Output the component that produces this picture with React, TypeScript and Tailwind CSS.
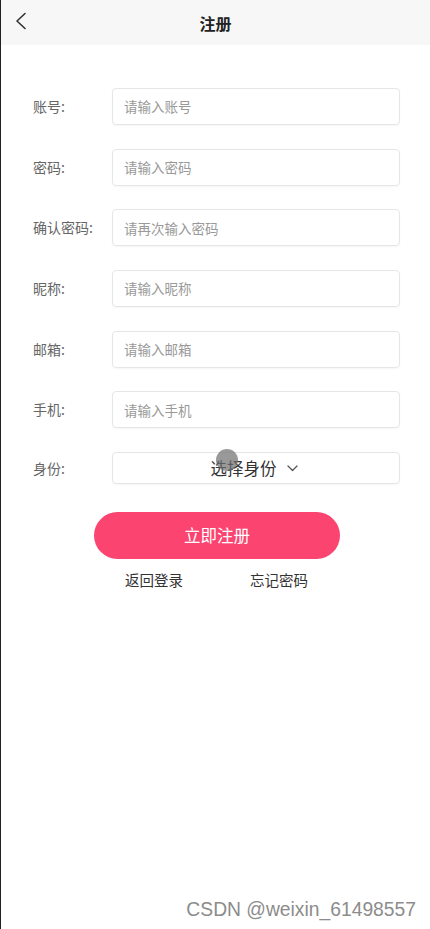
import React from "react";

const rows = [
  { label: "账号:", ph: "请输入账号" },
  { label: "密码:", ph: "请输入密码" },
  { label: "确认密码:", ph: "请再次输入密码" },
  { label: "昵称:", ph: "请输入昵称" },
  { label: "邮箱:", ph: "请输入邮箱" },
  { label: "手机:", ph: "请输入手机" },
];

export default function App() {
  return (
    <div
      className="relative w-[430px] h-[929px] bg-white border-l border-[#222] overflow-hidden"
      style={{ fontFamily: '"Noto Sans CJK SC", "Noto Sans", sans-serif' }}
    >
      <div className="relative h-[45px] bg-[#f7f7f7] flex items-center justify-center">
        <svg className="absolute left-[13px] top-[12px]" width="14" height="18" viewBox="0 0 14 18" fill="none">
          <path d="M11 1.5 L3 9 L11 16.5" stroke="#333" strokeWidth="1.6" strokeLinecap="round" strokeLinejoin="round" />
        </svg>
        <span className="text-[16px] font-bold text-[#222]">注册</span>
      </div>

      <div className="mt-[43px] flex flex-col gap-[23.7px] pl-[32px]">
        {rows.map((r) => (
          <div key={r.label} className="flex items-center">
            <div className="w-[79px] text-[14px] text-[#666]">{r.label}</div>
            <div className="w-[288px] h-[37px] border border-[#e6e6e6] rounded-[4px] shadow-[0_1px_2px_rgba(0,0,0,0.04)] flex items-center pl-[11px] text-[13.5px] text-[#999]">
              {r.ph}
            </div>
          </div>
        ))}
        <div className="flex items-center">
          <div className="w-[79px] text-[14px] text-[#666]">身份:</div>
          <div className="w-[288px] h-[32px] border border-[#e6e6e6] rounded-[4px] shadow-[0_1px_2px_rgba(0,0,0,0.04)] flex items-center justify-center pr-[4px] text-[16.5px] text-[#333]">
            <span>选择身份</span>
            <svg className="ml-[10px]" width="11" height="7" viewBox="0 0 11 7" fill="none">
              <path d="M1 1 L5.5 5.5 L10 1" stroke="#555" strokeWidth="1.3" strokeLinecap="round" strokeLinejoin="round" />
            </svg>
          </div>
        </div>
      </div>

      <div className="mt-[28px] flex justify-center pl-[3px]">
        <div className="w-[246px] h-[47px] rounded-full bg-[#fc4471] flex items-center justify-center text-white text-[16.5px]">
          立即注册
        </div>
      </div>

      <div className="mt-[10px] flex text-[14.5px] text-[#333]">
        <span className="ml-[124px]">返回登录</span>
        <span className="ml-[67px]">忘记密码</span>
      </div>

      <div className="absolute left-[215px] top-[449px] w-[22px] h-[22px] rounded-full bg-[rgba(110,110,110,0.7)]" />

      <div
        className="absolute right-[14px] top-[896px] text-[19.3px] text-[#8c8c8c]"
        style={{ fontFamily: '"Liberation Sans", Arial, sans-serif' }}
      >
        CSDN @weixin_61498557
      </div>
    </div>
  );
}
